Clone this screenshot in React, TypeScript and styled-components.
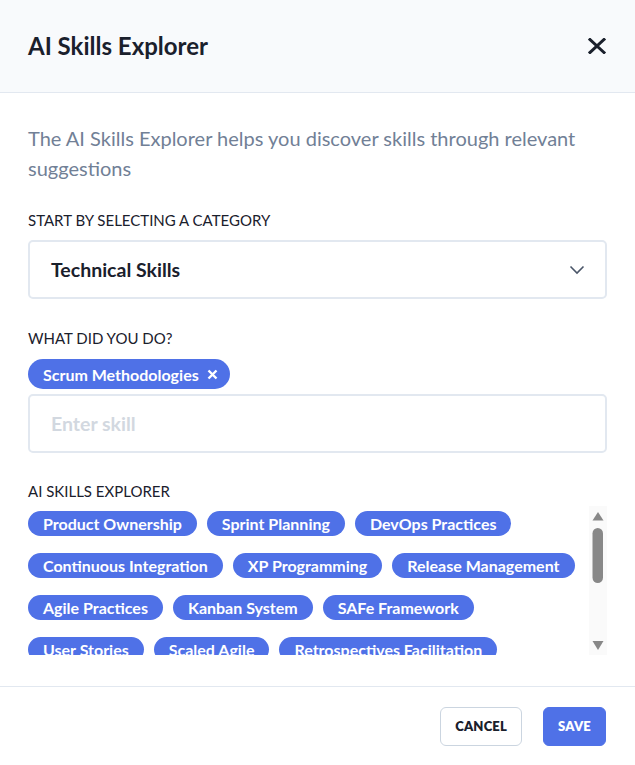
import React from "react";
import styled, { createGlobalStyle } from "styled-components";

const GlobalStyle = createGlobalStyle`
  * { box-sizing: border-box; }
  html, body { margin: 0; padding: 0; background: #ffffff; }
  body { font-family: "Lato", "Noto Sans", sans-serif; color: #1a202c; }
`;

const Modal = styled.div`
  display: flex;
  flex-direction: column;
  width: 635px;
  height: 765px;
  background: #ffffff;
`;

const Header = styled.header`
  display: flex;
  align-items: center;
  justify-content: space-between;
  height: 93px;
  padding: 0 29px 1px 28px;
  background: #f8fafc;
  border-bottom: 1px solid #e2e8f0;
`;

const Title = styled.h1`
  margin: 0;
  font-size: 24px;
  font-weight: 700;
  color: #1a202c;
`;

const CloseButton = styled.button`
  display: flex;
  align-items: center;
  justify-content: center;
  width: 18px;
  height: 18px;
  padding: 0;
  border: none;
  background: none;
  color: #1a202c;
  cursor: pointer;
`;

const Body = styled.main`
  flex: 1;
  display: flex;
  flex-direction: column;
  padding: 30px 28px 0 28px;
  min-height: 0;
`;

const Description = styled.p`
  margin: 0 0 27px 0;
  font-size: 20px;
  line-height: 30px;
  color: #718096;
`;

const Label = styled.div<{ $mt?: number; $mb?: number }>`
  margin-top: ${(p) => p.$mt ?? 0}px;
  margin-bottom: ${(p) => p.$mb ?? 10}px;
  font-size: 15px;
  line-height: 20px;
  text-transform: uppercase;
  color: #1a202c;
`;

const Select = styled.div`
  display: flex;
  align-items: center;
  justify-content: space-between;
  height: 59px;
  padding: 0 20px 0 21px;
  border: 2px solid #e2e8f0;
  border-radius: 5px;
  font-size: 19.5px;
  font-weight: 700;
  color: #1a202c;
`;

const TagRow = styled.div`
  display: flex;
  margin-bottom: 5px;
`;

const Tag = styled.span<{ $size?: "lg" | "sm" }>`
  display: inline-flex;
  align-items: center;
  gap: 8px;
  height: ${(p) => (p.$size === "lg" ? 30 : 25)}px;
  padding: 0 ${(p) => (p.$size === "lg" ? 12 : 15)}px 0 15px;
  border-radius: 15px;
  background: #4f71e7;
  color: #ffffff;
  font-size: 16px;
  font-weight: 700;
  white-space: nowrap;
`;

const TagClose = styled.span`
  display: inline-flex;
  align-items: center;
`;

const Input = styled.input`
  height: 59px;
  width: 100%;
  padding: 0 21px;
  border: 2px solid #e2e8f0;
  border-radius: 5px;
  font-family: inherit;
  font-size: 19.5px;
  font-weight: 700;
  color: #1a202c;
  outline: none;
  &::placeholder { color: #d2d8e0; }
`;

const SuggestionBox = styled.div`
  display: flex;
  height: 149px;
  margin-bottom: 31px;
`;

const Suggestions = styled.div`
  flex: 1;
  display: flex;
  flex-wrap: wrap;
  align-content: flex-start;
  gap: 17px 10px;
  padding-top: 5px;
  overflow: hidden;
`;

const ScrollTrack = styled.div`
  flex: 0 0 18px;
  display: flex;
  background: #fafafa;
`;

const Footer = styled.footer`
  display: flex;
  justify-content: flex-end;
  align-items: center;
  gap: 21px;
  height: 79px;
  padding: 0 29px 0 28px;
  border-top: 1px solid #e2e8f0;
`;

const Button = styled.button<{ $primary?: boolean }>`
  height: 39px;
  padding: 0 14px;
  border-radius: 6px;
  border: 1px solid ${(p) => (p.$primary ? "#4f71e7" : "#cbd5e0")};
  background: ${(p) => (p.$primary ? "#4f71e7" : "#ffffff")};
  color: ${(p) => (p.$primary ? "#ffffff" : "#1a202c")};
  font-family: inherit;
  font-size: 13px;
  font-weight: 800;
  letter-spacing: 0.2px;
  cursor: pointer;
`;

const suggestions = [
  "Product Ownership",
  "Sprint Planning",
  "DevOps Practices",
  "Continuous Integration",
  "XP Programming",
  "Release Management",
  "Agile Practices",
  "Kanban System",
  "SAFe Framework",
  "User Stories",
  "Scaled Agile",
  "Retrospectives Facilitation",
];

export default function App() {
  return (
    <>
      <GlobalStyle />
      <Modal>
        <Header>
          <Title>AI Skills Explorer</Title>
          <CloseButton aria-label="Close">
            <svg width="18" height="16" viewBox="0 0 18 16">
              <path d="M2 1.5 L16 14.5 M16 1.5 L2 14.5" stroke="currentColor" strokeWidth="3" strokeLinecap="square" />
            </svg>
          </CloseButton>
        </Header>
        <Body>
          <Description>
            The AI Skills Explorer helps you discover skills through relevant suggestions
          </Description>
          <Label>Start by selecting a category</Label>
          <Select>
            <span>Technical Skills</span>
            <svg width="16" height="10" viewBox="0 0 16 10">
              <path d="M1.5 1.5 L8 8 L14.5 1.5" fill="none" stroke="#4a5568" strokeWidth="1.6" />
            </svg>
          </Select>
          <Label $mt={29} $mb={11}>What did you do?</Label>
          <TagRow>
            <Tag $size="lg">
              Scrum Methodologies
              <TagClose>
                <svg width="11" height="11" viewBox="0 0 11 11">
                  <path d="M1.5 1.5 L9.5 9.5 M9.5 1.5 L1.5 9.5" stroke="#ffffff" strokeWidth="2.4" />
                </svg>
              </TagClose>
            </Tag>
          </TagRow>
          <Input placeholder="Enter skill" />
          <Label $mt={28} $mb={5}>AI Skills Explorer</Label>
          <SuggestionBox>
            <Suggestions>
              {suggestions.map((s) => (
                <Tag key={s}>{s}</Tag>
              ))}
            </Suggestions>
            <ScrollTrack>
              <svg width="18" height="149" viewBox="0 0 18 149">
                <path d="M3.5 14.5 L14.5 14.5 L9 6 Z" fill="#888888" />
                <rect x="3.5" y="22" width="10.5" height="55" rx="5.25" fill="#888888" />
                <path d="M3.5 135 L14.5 135 L9 144 Z" fill="#888888" />
              </svg>
            </ScrollTrack>
          </SuggestionBox>
        </Body>
        <Footer>
          <Button>CANCEL</Button>
          <Button $primary>SAVE</Button>
        </Footer>
      </Modal>
    </>
  );
}
